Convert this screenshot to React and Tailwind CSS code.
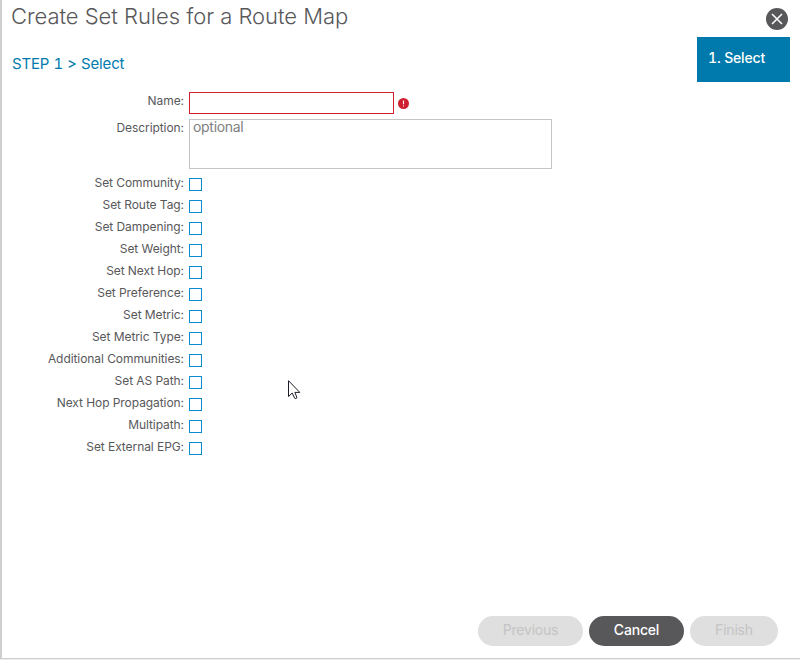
const rules = [
  'Set Community:',
  'Set Route Tag:',
  'Set Dampening:',
  'Set Weight:',
  'Set Next Hop:',
  'Set Preference:',
  'Set Metric:',
  'Set Metric Type:',
  'Additional Communities:',
  'Set AS Path:',
  'Next Hop Propagation:',
  'Multipath:',
  'Set External EPG:',
];

function Label({ children }) {
  return (
    <span className="w-[182px] shrink-0 whitespace-nowrap text-right text-[12px] leading-[18px] tracking-[-0.07px] text-[#58585b]">
      {children}
    </span>
  );
}

function Header() {
  return (
    <header className="flex h-[92px] shrink-0 justify-between">
      <div className="pl-[9px]">
        <h1 className="mt-[2px] whitespace-nowrap text-[22px] font-light leading-[28px] tracking-[-0.03px] text-[#58585b]">
          Create Set Rules for a Route Map
        </h1>
        <h2 className="mt-[24px] whitespace-nowrap pl-px text-[15px] leading-5 tracking-[-0.15px] tabular-nums text-[#007aad] [font-feature-settings:'calt'_0] [word-spacing:0.3px]">
          STEP 1 &gt; Select
        </h2>
      </div>
      <div className="mr-[10px] flex flex-col items-end">
        <button className="mr-[2px] mt-[8px] h-[22px] w-[22px]" aria-label="Close">
          <svg width="22" height="22" viewBox="0 0 22 22">
            <circle cx="11" cy="11" r="11" fill="#58585b" />
            <path d="M6 6L16 16M16 6L6 16" stroke="#fff" strokeWidth="1.5" />
          </svg>
        </button>
        <div className="mt-[7px] h-[45px] w-[93px] bg-[#007aad] pl-[11px] pt-[11px] text-[14px] font-medium leading-5 tracking-[-0.15px] tabular-nums text-white">
          1. Select
        </div>
      </div>
    </header>
  );
}

export default function App() {
  return (
    <div className="relative flex h-[660px] w-[800px] flex-col overflow-hidden bg-[#ececec] font-['Inter','Liberation_Sans',sans-serif]">
      <div className="flex h-[659px] flex-col border-b border-l-2 border-[#cfcfcf] bg-white">
        <Header />
        <main className="flex flex-1 flex-col">
          <div className="flex h-[27px] gap-[5px]">
            <Label>Name:</Label>
            <input className="h-[22px] w-[205px] border border-[#cf2030] bg-white px-1 outline-none" aria-label="Name" />
            <svg className="-ml-px mt-[6px]" width="11" height="11" viewBox="0 0 11 11">
              <circle cx="5.5" cy="5.5" r="5.5" fill="#cf2030" />
              <path d="M5.5 2.5V6.3M5.5 7.4V8.6" stroke="#fff" strokeWidth="1.1" />
            </svg>
          </div>
          <div className="flex h-[55px] gap-[5px]">
            <Label>Description:</Label>
            <textarea
              className="h-[50px] w-[363px] resize-none border border-[#c4c4c4] bg-white px-[3px] py-0 text-[14px] leading-[14px] tracking-[-0.3px] outline-none placeholder:text-[#808080]"
              placeholder="optional"
            />
          </div>
          {rules.map((rule) => (
            <label key={rule} className="flex h-[22px] gap-[5px]">
              <Label>{rule}</Label>
              <input type="checkbox" className="mt-[4px] h-[13px] w-[13px] appearance-none border border-[#0a8ccf] bg-white" />
            </label>
          ))}
        </main>
        <footer className="mb-[12px] mr-[22px] flex shrink-0 justify-end gap-[6px] text-[14px] font-medium leading-[28px] tracking-[-0.2px]">
          <button className="h-[30px] w-[105px] rounded-full bg-[#dfdfdf] pb-[2px] font-normal text-[#c4c4c4]" disabled>Previous</button>
          <button className="h-[30px] w-[95px] rounded-full bg-[#58585b] pb-[2px] text-white">Cancel</button>
          <button className="h-[30px] w-[88px] rounded-full bg-[#dfdfdf] pb-[2px] font-normal text-[#c4c4c4]" disabled>Finish</button>
        </footer>
      </div>
      <svg className="pointer-events-none absolute left-[288px] top-[380px]" width="13" height="20" viewBox="0 0 13 20">
        <path
          d="M.5.7V16.5L4.2 13L6.7 18.3Q7.8 19 9 17.8L6.9 12.4H11.8Z"
          fill="#fff"
          stroke="#1c1c28"
          strokeWidth="1"
        />
      </svg>
    </div>
  );
}
